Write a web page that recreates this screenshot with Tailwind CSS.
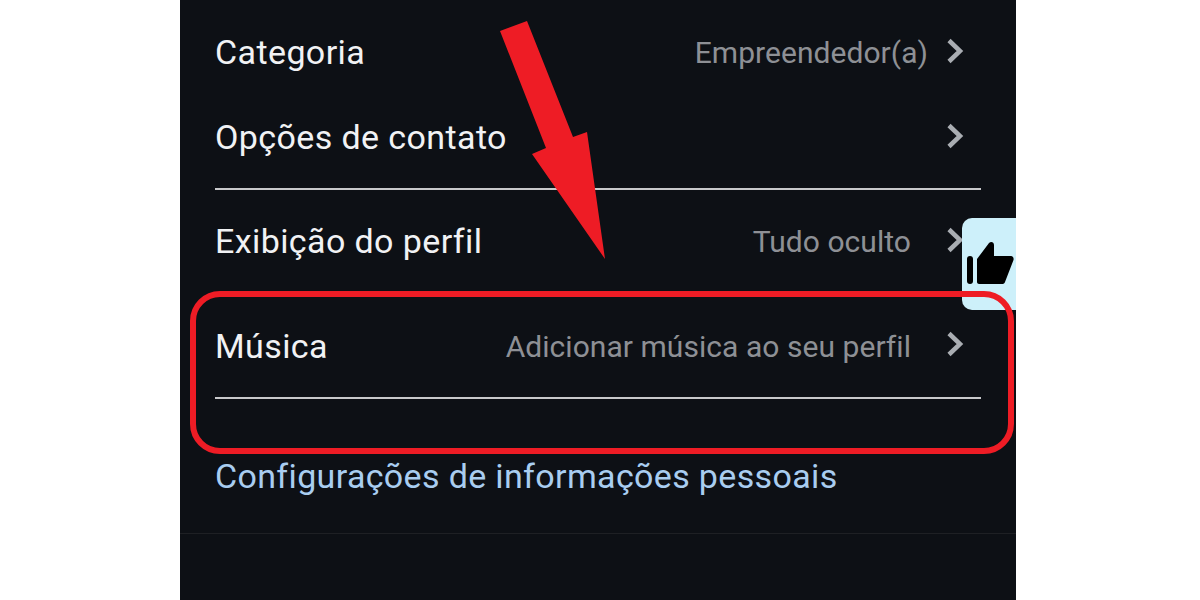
<!DOCTYPE html>
<html lang="en">
<head>
  <meta charset="UTF-8">
  <title>Perfil</title>
  <script src="https://cdn.jsdelivr.net/npm/@tailwindcss/browser@4"></script>
</head>
<body class="bg-white">
  <div class="relative w-[836px] h-[600px] ml-[180px] bg-[#0d1015] overflow-hidden font-['Roboto',sans-serif] text-[34px] tracking-[0.4px] text-[#f1f2f4]">
    <div class="px-[35px] pt-[10px]">
      <!-- Rows -->
      <div class="h-[85px] pr-[17px] flex items-center justify-between">
        <span>Categoria</span>
        <div class="flex items-center text-[30px] tracking-[0.05px] text-[#8e9095]">
          <span>Empreendedor(a)</span>
          <svg class="w-[18px] h-[26px] ml-[18px] mb-[4px]" viewBox="0 0 18 26" fill="none" stroke="#a9adb2" stroke-width="4.5"><path d="M3 2.5 14 13 3 23.5"/></svg>
        </div>
      </div>
      <div class="h-[85px] pr-[17px] flex items-center justify-between">
        <span>Opções de contato</span>
        <svg class="w-[18px] h-[26px] mb-[4px]" viewBox="0 0 18 26" fill="none" stroke="#a9adb2" stroke-width="4.5"><path d="M3 2.5 14 13 3 23.5"/></svg>
      </div>
      <div class="mt-[8px] h-[2px] bg-[#c8c9cb]"></div>
      <div class="h-[103px] pr-[17px] flex items-center justify-between">
        <span>Exibição do perfil</span>
        <div class="flex items-center text-[30px] tracking-[0.05px] text-[#8e9095]">
          <span>Tudo oculto</span>
          <svg class="w-[18px] h-[26px] ml-[35px] mb-[4px]" viewBox="0 0 18 26" fill="none" stroke="#a9adb2" stroke-width="4.5"><path d="M3 2.5 14 13 3 23.5"/></svg>
        </div>
      </div>
      <div class="h-[104px] pt-[2px] pr-[17px] flex items-center justify-between">
        <span>Música</span>
        <div class="flex items-center text-[30px] tracking-[0.05px] text-[#8e9095]">
          <span>Adicionar música ao seu perfil</span>
          <svg class="w-[18px] h-[26px] ml-[35px] mb-[4px]" viewBox="0 0 18 26" fill="none" stroke="#a9adb2" stroke-width="4.5"><path d="M3 2.5 14 13 3 23.5"/></svg>
        </div>
      </div>
      <div class="h-[2px] bg-[#c8c9cb]"></div>
      <div class="mt-[52px] tracking-[0.35px] text-[#a9cdf0]">Configurações de informações pessoais</div>
    </div>
    <div class="mt-[31px] h-px bg-[#1e2024]"></div>

    <!-- Floating like tab -->
    <div class="absolute left-[782px] top-[218px] w-[54px] h-[92px] rounded-l-[10px] bg-[#cdf0fa]">
      <svg class="absolute left-[4px] top-[23px] w-[48px] h-[44px]" viewBox="0 0 48 44" fill="#000">
        <rect x="1" y="15" width="6" height="28" rx="3"/>
        <path d="M11 18 23 2C25 0 28 1 28 4V15H45C47 15 48 17 47.500 19L39 41C38.500 42.500 37.500 43 36 43H13C12 43 11 42 11 41Z"/>
      </svg>
    </div>

    <!-- Annotations -->
    <div class="absolute left-[10px] top-[291px] w-[824px] h-[163px] rounded-[30px] border-[6px] border-[#ee1c25]"></div>
    <svg class="absolute left-0 top-0 w-[836px] h-[600px]" viewBox="180 0 836 600">
      <polygon fill="#ee1c25" points="500,31 527,21 573,137 587,132 605,259 532,154 546,148"/>
    </svg>
  </div>
</body>
</html>
